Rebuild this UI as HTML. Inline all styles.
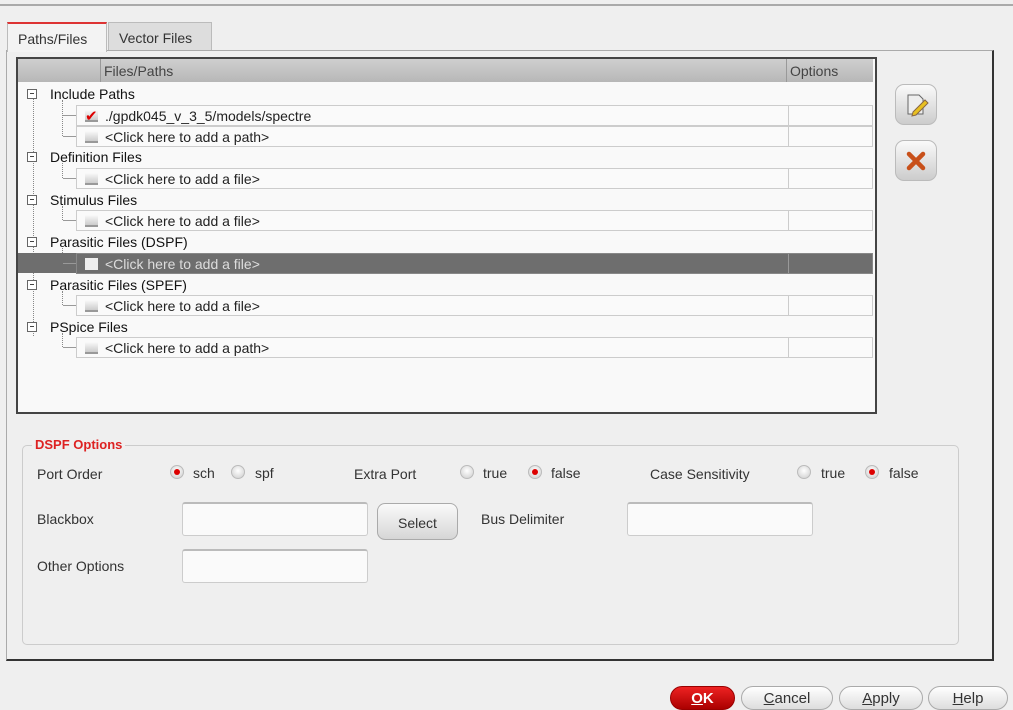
<!DOCTYPE html><html><head><style>
*{box-sizing:border-box;margin:0;padding:0}
body{width:1013px;height:710px;background:#efefef;font-family:"Liberation Sans","DejaVu Sans",sans-serif;font-size:14px;color:#333;position:relative;overflow:hidden}
.a{position:absolute}
.tab{position:absolute;top:22px;height:29px;border:1px solid #bbb;border-bottom:none;background:#ddd;font-size:14px;padding:7px 0 0 10px;color:#333}
.hdr{background:linear-gradient(#cfcfcf,#b7b7b7);}
.row{position:absolute;left:76px;width:797px;height:21px;border:1px solid #ccc;background:#fafafa}
.row .c{position:absolute;left:711px;top:0;bottom:0;border-left:1px solid #ccc}
.row:before{content:"";position:absolute;left:-14px;top:9px;width:13px;border-top:1px solid #999}
.cb{position:absolute;left:8px;top:4px;width:13px;height:12px;background:linear-gradient(#fafafa,#ccc);border-bottom:2px solid #999}
.rt{position:absolute;left:28px;top:2px;color:#222}
.par{position:absolute;left:50px;color:#111}
.pm{position:absolute;left:27px;width:10px;height:10px;border:1px solid #666;background:#fff}
.pm:after{content:"";position:absolute;left:2px;top:3px;width:4px;border-top:1px solid #444}
.vl{position:absolute;left:62px;border-left:1px dotted #888}
.rad{position:absolute;width:14px;height:14px;border-radius:50%;background:radial-gradient(circle at 50% 40%,#fff,#ccc);border:1px solid #bbb}
.rad.on:after{content:"";position:absolute;left:3px;top:3px;width:6px;height:6px;border-radius:50%;background:#d00}
.inp{position:absolute;height:34px;border:1px solid #ccc;border-top:2px solid #bbb;border-radius:3px;background:#fafafa}
.btn{position:absolute;top:686px;height:24px;border:1px solid #aaa;border-radius:12px;background:linear-gradient(#fff,#ddd);text-align:center;font-size:15px;padding-top:3px;color:#333}
</style></head><body>
<div class="a" style="left:0;top:4px;width:1013px;border-top:2px solid #aaa"></div>
<div class="tab" style="left:7px;width:100px;background:#f3f3f3;border-top:2px solid #d33;z-index:2;height:30px">Paths/Files</div>
<div class="tab" style="left:108px;width:104px;padding-left:10px">Vector Files</div>
<div class="a" style="left:6px;top:50px;width:988px;height:611px;border:1px solid #aaa;border-right:2px solid #333;border-bottom:2px solid #333"></div>
<div class="a" style="left:16px;top:57px;width:861px;height:357px;border:2px solid #444;background:#f9f9f9"></div>
<div class="a hdr" style="left:18px;top:59px;width:855px;height:23px"></div>
<div class="a" style="left:100px;top:59px;height:23px;border-left:1px solid #999"></div>
<div class="a" style="left:786px;top:59px;height:23px;border-left:1px solid #999"></div>
<div class="a" style="left:104px;top:63px;color:#444">Files/Paths</div>
<div class="a" style="left:790px;top:63px;color:#444">Options</div>
<div class="a" style="left:33px;top:98px;height:238px;border-left:1px dotted #888"></div>
<div class="vl" style="top:100px;height:36px"></div>
<div class="vl" style="top:163px;height:15px"></div>
<div class="vl" style="top:206px;height:14px"></div>
<div class="vl" style="top:248px;height:15px"></div>
<div class="vl" style="top:291px;height:14px"></div>
<div class="vl" style="top:333px;height:14px"></div>

<div class="pm" style="top:89px"></div><div class="par" style="top:86px">Include Paths</div>
<div class="row" style="top:105px"><div class="cb"></div><div class="a" style="left:8px;top:1px;color:#d00;font-size:15px;font-weight:bold">✔</div><div class="rt">./gpdk045_v_3_5/models/spectre</div><div class="c"></div></div>
<div class="row" style="top:126px"><div class="cb"></div><div class="rt">&lt;Click here to add a path&gt;</div><div class="c"></div></div>
<div class="pm" style="top:152px"></div><div class="par" style="top:149px">Definition Files</div>
<div class="row" style="top:168px"><div class="cb"></div><div class="rt">&lt;Click here to add a file&gt;</div><div class="c"></div></div>
<div class="pm" style="top:195px"></div><div class="par" style="top:192px">Stimulus Files</div>
<div class="row" style="top:210px"><div class="cb"></div><div class="rt">&lt;Click here to add a file&gt;</div><div class="c"></div></div>
<div class="pm" style="top:237px"></div><div class="par" style="top:234px">Parasitic Files (DSPF)</div>
<div class="a" style="left:18px;top:253px;width:855px;height:20px;background:#6e6e6e"></div>
<div class="row" style="top:253px;background:#6e6e6e;border-color:#888"><div class="cb" style="background:#eee;border:none"></div><div class="rt" style="color:#ddd">&lt;Click here to add a file&gt;</div><div class="c" style="border-color:#999"></div></div>
<div class="pm" style="top:280px"></div><div class="par" style="top:277px">Parasitic Files (SPEF)</div>
<div class="row" style="top:295px"><div class="cb"></div><div class="rt">&lt;Click here to add a file&gt;</div><div class="c"></div></div>
<div class="pm" style="top:322px"></div><div class="par" style="top:319px">PSpice Files</div>
<div class="row" style="top:337px"><div class="cb"></div><div class="rt">&lt;Click here to add a path&gt;</div><div class="c"></div></div>

<div class="a" style="left:895px;top:84px;width:42px;height:41px;border:1px solid #bbb;border-radius:9px;background:linear-gradient(#fafafa,#ccc)">
<svg width="40" height="40"><path d="M12 10h11l4 4v15H12z" fill="#eee" stroke="#666"/><path d="M17 27l12-12 3 3-12 12-4 1z" fill="#e8c020" stroke="#864"/></svg></div>
<div class="a" style="left:895px;top:140px;width:42px;height:41px;border:1px solid #bbb;border-radius:9px;background:linear-gradient(#fafafa,#ccc)">
<svg width="40" height="40"><path d="M13 13l14 14M27 13L13 27" stroke="#c8501a" stroke-width="4.5" stroke-linecap="round"/></svg></div>

<div class="a" style="left:22px;top:445px;width:937px;height:200px;border:1px solid #ccc;border-radius:5px"></div>
<div class="a" style="left:32px;top:437px;background:#efefef;padding:0 3px;color:#d22;font-weight:bold;font-size:13px">DSPF Options</div>
<div class="a" style="left:37px;top:466px">Port Order</div>
<div class="rad on" style="left:170px;top:465px"></div><div class="a" style="left:193px;top:465px">sch</div>
<div class="rad" style="left:231px;top:465px"></div><div class="a" style="left:255px;top:465px">spf</div>
<div class="a" style="left:354px;top:466px">Extra Port</div>
<div class="rad" style="left:460px;top:465px"></div><div class="a" style="left:483px;top:465px">true</div>
<div class="rad on" style="left:528px;top:465px"></div><div class="a" style="left:551px;top:465px">false</div>
<div class="a" style="left:650px;top:466px">Case Sensitivity</div>
<div class="rad" style="left:797px;top:465px"></div><div class="a" style="left:821px;top:465px">true</div>
<div class="rad on" style="left:865px;top:465px"></div><div class="a" style="left:889px;top:465px">false</div>
<div class="a" style="left:37px;top:511px">Blackbox</div>
<div class="inp" style="left:182px;top:502px;width:186px"></div>
<div class="a" style="left:377px;top:503px;width:81px;height:37px;border:1px solid #aaa;border-radius:8px;background:linear-gradient(#fafafa,#d6d6d6);text-align:center;padding-top:11px">Select</div>
<div class="a" style="left:481px;top:511px">Bus Delimiter</div>
<div class="inp" style="left:627px;top:502px;width:186px"></div>
<div class="a" style="left:37px;top:558px">Other Options</div>
<div class="inp" style="left:182px;top:549px;width:186px"></div>

<div class="btn" style="left:670px;width:65px;background:linear-gradient(#e22,#a00);border-color:#900;color:#fff;font-weight:bold"><u>O</u>K</div>
<div class="btn" style="left:741px;width:92px"><u>C</u>ancel</div>
<div class="btn" style="left:839px;width:84px"><u>A</u>pply</div>
<div class="btn" style="left:928px;width:80px"><u>H</u>elp</div>
</body></html>
